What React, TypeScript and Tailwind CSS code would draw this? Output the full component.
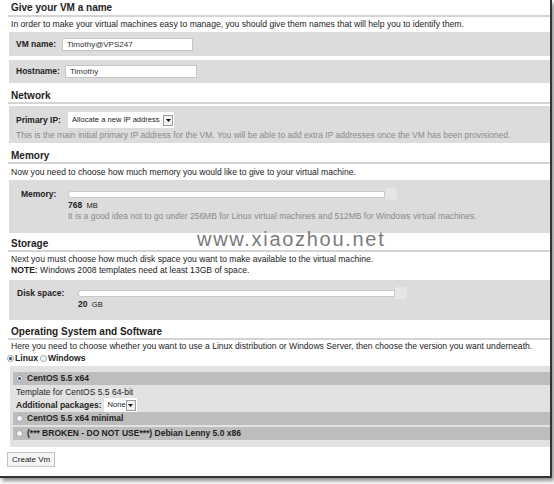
import type { ReactNode } from 'react';

const font = { fontFamily: '"Liberation Sans", Arial, sans-serif' };

function Heading({ children, first }: { children: ReactNode; first?: boolean }) {
  return (
    <div
      className={`ml-[8px] pl-[3px] border-b-2 border-[#d4d4d4] text-[10px] font-bold text-[#222] ${
        first ? 'h-[17px] pt-[1px] leading-[14px]' : 'h-[19px] pt-[4px] leading-[13px]'
      }`}
    >
      {children}
    </div>
  );
}

function TextInput({ value, width }: { value: string; width: string }) {
  return (
    <div className={`${width} h-[13px] bg-white border border-[#c4c4c4] pl-[4px] text-[8px] leading-[11px] text-[#333]`}>
      {value}
    </div>
  );
}

function Select({ value, width }: { value: string; width: string }) {
  return (
    <div className={`${width} flex items-center bg-white pl-[4px] pr-[1px] text-[7.6px] text-[#222]`}>
      <span className="flex-1 whitespace-nowrap">{value}</span>
      <span className="w-[10px] h-[11px] border border-[#9a9a9a] bg-[#f2f2f2] flex items-center justify-center">
        <svg width="5" height="3" viewBox="0 0 5 3">
          <path d="M0 0h5L2.5 3z" fill="#111" />
        </svg>
      </span>
    </div>
  );
}

function Slider({ trackWidth }: { trackWidth: string }) {
  return (
    <div className="h-[12px] flex items-center">
      <div className={`${trackWidth} h-[7px] bg-white border border-[#c8c8c8] rounded-l-[3px]`} />
      <div className="w-[12px] h-[12px] bg-[#e6e6e6] rounded-[2px]" />
    </div>
  );
}

function Radio({ checked }: { checked?: boolean }) {
  return (
    <span className="inline-flex w-[7px] h-[7px] rounded-full border border-[#9aa4ae] bg-[#f4f6f8] items-center justify-center">
      {checked && <span className="w-[3px] h-[3px] rounded-full bg-[#2d4860]" />}
    </span>
  );
}

function TemplateRow({ label, checked }: { label: string; checked?: boolean }) {
  return (
    <div className="h-[13px] bg-[#bdbdbd] flex items-center pl-[3px] gap-[4px] text-[8.5px] font-bold text-[#222]">
      <Radio checked={checked} />
      <span>{label}</span>
    </div>
  );
}

export default function App() {
  return (
    <div className="w-[554px] h-[484px] bg-white relative overflow-hidden text-[#222]" style={font}>
      <div className="w-[552px] h-[478px] border-r-2 border-b-2 border-[#333] shadow-[2px_3px_4px_rgba(0,0,0,0.45)] flex flex-col">
        {/* Name */}
        <Heading first>Give your VM a name</Heading>
        <div className="ml-[8px] pl-[3px] h-[15px] leading-[15px] text-[8.6px]">
          In order to make your virtual machines easy to manage, you should give them names that will help you to identify them.
        </div>
        <div className="ml-[9px] h-[24px] bg-[#dcdcdc] flex items-center">
          <span className="pl-[7px] w-[53px] text-[8.5px] font-bold">VM name:</span>
          <TextInput value="Timothy@VPS247" width="w-[131px]" />
        </div>
        <div className="ml-[9px] mt-[4px] h-[23px] bg-[#dcdcdc] flex items-center">
          <span className="pl-[7px] w-[56px] text-[8.5px] font-bold">Hostname:</span>
          <TextInput value="Timothy" width="w-[132px]" />
        </div>

        {/* Network */}
        <div className="mt-[2px]">
          <Heading>Network</Heading>
        </div>
        <div className="ml-[9px] mt-[2px] h-[37px] bg-[#dcdcdc] pt-[6px]">
          <div className="flex items-center h-[16px]">
            <span className="pl-[7px] w-[59px] text-[8.5px] font-bold">Primary IP:</span>
            <Select value="Allocate a new IP address" width="w-[106px] h-[16px]" />
          </div>
          <div className="pl-[7px] mt-[1px] leading-[12px] text-[8.5px] text-[#8a8a8a]">
            This is the main initial primary IP address for the VM. You will be able to add extra IP addresses once the VM has been provisioned.
          </div>
        </div>

        {/* Memory */}
        <div className="mt-[2px]">
          <Heading>Memory</Heading>
        </div>
        <div className="ml-[8px] pl-[3px] h-[16px] leading-[16px] text-[8.6px]">
          Now you need to choose how much memory you would like to give to your virtual machine.
        </div>
        <div className="ml-[9px] h-[53px] bg-[#dcdcdc] flex pt-[8px]">
          <span className="pl-[12px] w-[59px] h-[12px] leading-[12px] text-[8.5px] font-bold">Memory:</span>
          <div className="flex flex-col">
            <Slider trackWidth="w-[317px]" />
            <div className="h-[10px] leading-[10px] text-[8.5px] font-bold">
              768 <span className="ml-[2px] font-normal text-[7.5px]">MB</span>
            </div>
            <div className="h-[12px] leading-[12px] text-[8.5px] text-[#8a8a8a]">
              It is a good idea not to go under 256MB for Linux virtual machines and 512MB for Windows virtual machines.
            </div>
          </div>
        </div>

        {/* Storage */}
        <Heading>Storage</Heading>
        <div className="ml-[8px] pl-[3px] pt-[2px] h-[28px] leading-[11px] text-[8.6px]">
          <div>Next you must choose how much disk space you want to make available to the virtual machine.</div>
          <div>
            <span className="font-bold">NOTE:</span> Windows 2008 templates need at least 13GB of space.
          </div>
        </div>
        <div className="ml-[9px] h-[40px] bg-[#dcdcdc] flex pt-[7px]">
          <span className="pl-[8px] w-[69px] h-[12px] leading-[12px] text-[8.5px] font-bold">Disk space:</span>
          <div className="flex flex-col">
            <Slider trackWidth="w-[317px]" />
            <div className="h-[11px] leading-[11px] text-[8.5px] font-bold">
              20 <span className="ml-[2px] font-normal text-[7.5px]">GB</span>
            </div>
          </div>
        </div>

        {/* Operating system */}
        <div className="mt-[1px]">
          <Heading>Operating System and Software</Heading>
        </div>
        <div className="ml-[7px] text-[8.6px] leading-[12px]">
          <div className="pl-[4px]">
            Here you need to choose whether you want to use a Linux distribution or Windows Server, then choose the version you want underneath.
          </div>
          <div className="flex items-center h-[12px] font-bold">
            <Radio checked />
            <span className="ml-[1px]">Linux</span>
            <span className="ml-[2px] flex">
              <Radio />
            </span>
            <span className="ml-[1px]">Windows</span>
          </div>
        </div>
        <div className="ml-[10px] mt-[2px] h-[81px] bg-[#e2e2e2] pl-[3px] pt-[6px]">
          <TemplateRow label="CentOS 5.5 x64" checked />
          <div className="pl-[3px] h-[13px] leading-[14px] text-[8.5px]">Template for CentOS 5.5 64-bit</div>
          <div className="pl-[3px] h-[14px] flex items-center text-[8.5px]">
            <span className="font-bold mr-[2px]">Additional packages:</span>
            <Select value="None" width="w-[33px] h-[14px]" />
          </div>
          <TemplateRow label="CentOS 5.5 x64 minimal" />
          <div className="mt-[2px]">
            <TemplateRow label="(*** BROKEN - DO NOT USE***) Debian Lenny 5.0 x86" />
          </div>
        </div>

        <div className="ml-[7px] mt-[5px] flex">
          <button className="h-[15px] px-[4px] bg-[#f5f5f5] border border-[#c2c2c2] text-[8px] leading-[13px] text-[#222]">
            Create Vm
          </button>
        </div>
      </div>

      {/* site watermark */}
      <div className="absolute left-[197px] top-[227px] text-[20px] leading-[24px] text-[#7a7a7a] tracking-[1.7px] pointer-events-none">
        www.xiaozhou.net
      </div>
    </div>
  );
}
